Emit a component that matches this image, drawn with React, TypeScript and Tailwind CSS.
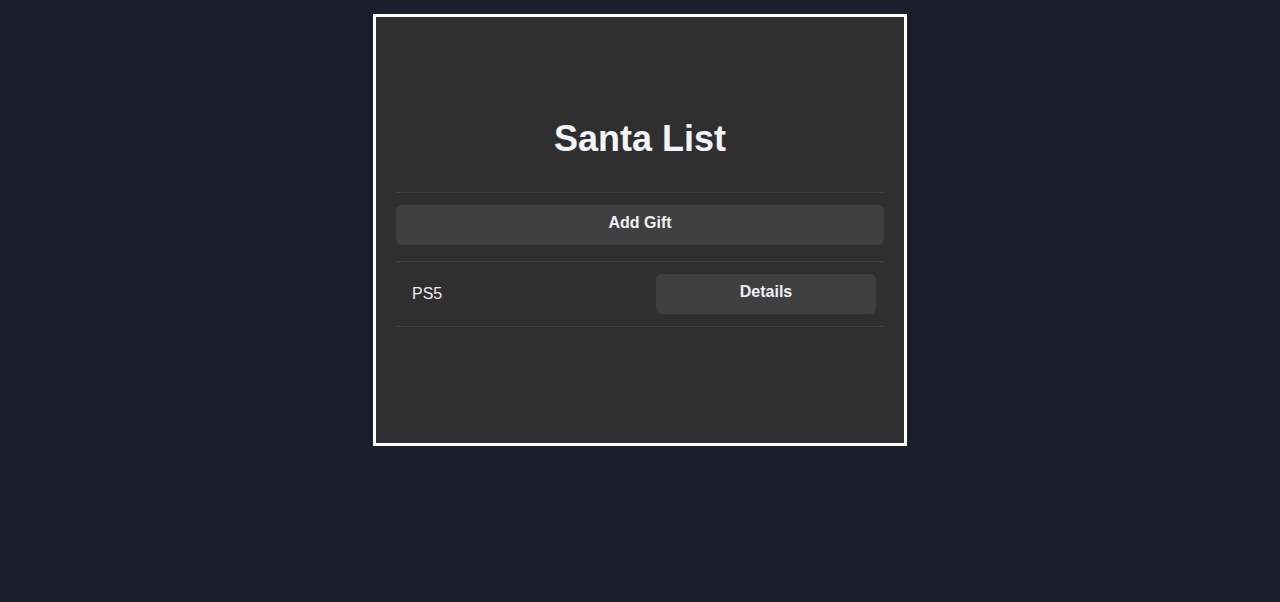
import React from 'react';

const gifts = [{ id: 1, name: 'PS5' }];

export default function App() {
  return (
    <div className="min-h-[602px] bg-[#1b1f2b] flex justify-center pt-[14px] font-['Liberation_Sans',Arial,sans-serif]">
      <div className="w-[534px] h-[432px] border-[3px] border-white bg-[#2f2f2f] px-5">
        <h1 className="mt-[102px] h-10 text-center text-[36px] leading-10 font-bold text-[#f3f3fa]">
          Santa List
        </h1>
        <div className="mt-[33px] border-t border-[#3f3f3f] pt-3 pb-4">
          <button className="w-full h-10 rounded-md bg-[#3f3f3f] pt-[6px] pb-[10px] text-base leading-6 font-bold text-[#f0f0f5]">
            Add Gift
          </button>
        </div>
        <ul className="border-t border-[#3f3f3f]">
          {gifts.map((g) => (
            <li
              key={g.id}
              className="flex items-center justify-between border-b border-[#3f3f3f] py-3 pl-4 pr-2"
            >
              <span className="text-base leading-6 text-[#ececf2]">{g.name}</span>
              <button className="w-[220px] h-10 rounded-md bg-[#3f3f3f] pt-[6px] pb-[10px] text-base leading-6 font-bold text-[#f0f0f5]">
                Details
              </button>
            </li>
          ))}
        </ul>
      </div>
    </div>
  );
}
